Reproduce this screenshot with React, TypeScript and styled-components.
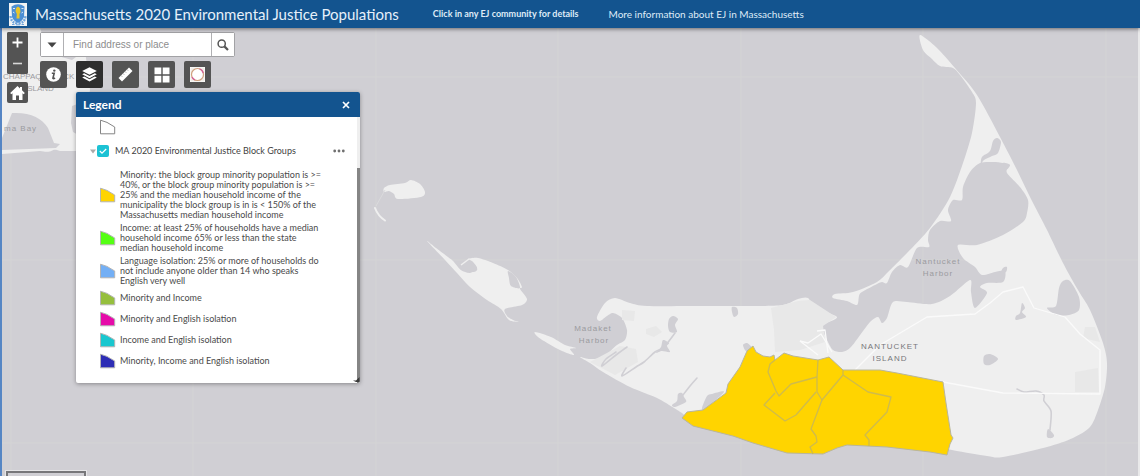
import React from "react";
import styled, { createGlobalStyle, css } from "styled-components";

const GlobalStyle = createGlobalStyle`
  * { box-sizing: border-box; }
  body { margin: 0; font-family: Lato, "Open Sans", sans-serif; background: #d0cfd4; }
  button, input { font-family: inherit; }
`;

const BLUE = "#13548f";
const SEA = "#d0cfd4";
const LAND = "#efefef";

/* ---------- page frame ---------- */

const Page = styled.div`
  min-height: 100vh;
  display: grid;
  grid-template-rows: auto 1fr;
`;

const Header = styled.header`
  display: flex;
  align-items: center;
  height: 28px;
  padding-left: 9px;
  background: ${BLUE};
  color: #fff;
  box-shadow: 0 1px 4px rgba(0, 0, 0, 0.5);
  z-index: 2;
`;

const Title = styled.h1`
  margin: 0 34px 0 8px;
  font-size: 15px;
  line-height: 20px;
  font-weight: 400;
  color: #e6f0fa;
  white-space: nowrap;
`;

const HeaderLink = styled.a<{ $strong?: boolean }>`
  margin-right: 30px;
  font-size: ${(p) => (p.$strong ? 9 : 10)}px;
  line-height: 14px;
  font-weight: ${(p) => (p.$strong ? 700 : 400)};
  color: #dfebf7;
  text-decoration: none;
  white-space: nowrap;
`;

const Stage = styled.main`
  display: grid;
  position: relative;
  border-left: 2px solid #5585c4;
  background: ${SEA};
  overflow: hidden;
  & > * { grid-area: 1 / 1; }
`;

const MapSvg = styled.svg`
  display: block;
  width: 100%;
  height: 100%;
`;

const Overlay = styled.div`
  display: flex;
  align-items: flex-start;
  gap: 12px;
  padding: 4px 0 0 5px;
  z-index: 1;
`;

const Stack = styled.div<{ $gap: number }>`
  display: flex;
  flex-direction: column;
  gap: ${(p) => p.$gap}px;
`;

const ScaleBar = styled.div`
  position: absolute;
  left: 4px;
  bottom: 0;
  width: 80px;
  height: 5px;
  border: 2px solid #77777a;
  border-bottom: 0;
  outline: 1px solid #e6e6e8;
`;

/* ---------- map controls ---------- */

const MapButton = styled.button<{ $size?: number; $active?: boolean }>`
  display: flex;
  align-items: center;
  justify-content: center;
  width: ${(p) => p.$size ?? 27}px;
  height: ${(p) => p.$size ?? 27}px;
  padding: 0;
  border: 0;
  border-radius: 2px;
  background: ${(p) => (p.$active ? "#2e2e2e" : "#545454")};
  color: #fff;
`;

const ZoomGroup = styled.div`
  display: flex;
  flex-direction: column;
  border-radius: 2px;
  background: #545454;
`;

const SearchBox = styled.form`
  display: flex;
  width: 195px;
  height: 25px;
  border: 1px solid #a2a2a5;
  border-radius: 2px;
  background: #fff;
`;

const SearchButton = styled.button<{ $side: "left" | "right" }>`
  display: flex;
  align-items: center;
  justify-content: center;
  width: 23px;
  padding: 0;
  border: 0;
  background: #fff;
  ${(p) =>
    p.$side === "left"
      ? css`border-right: 1px solid #b0b0b3;`
      : css`border-left: 1px solid #b0b0b3;`}
`;

const SearchInput = styled.input`
  flex: 1;
  min-width: 0;
  padding: 0 9px;
  border: 0;
  outline: 0;
  font-family: "Liberation Sans", Arial, sans-serif;
  font-size: 10px;
  color: #555;
  background: transparent;
  &::placeholder { color: #8d8d8d; opacity: 1; }
`;

const Toolbar = styled.div`
  display: flex;
  gap: 9px;
`;

/* ---------- legend panel ---------- */

const Panel = styled.section`
  position: relative;
  width: 284px;
  margin-left: 36px;
  border-radius: 2px;
  background: #fff;
  box-shadow: 0 1px 4px rgba(0, 0, 0, 0.35);
  overflow: hidden;
`;

const PanelHeader = styled.div`
  display: flex;
  align-items: center;
  justify-content: space-between;
  height: 25px;
  padding: 0 10px 0 7px;
  background: ${BLUE};
  color: #fff;
`;

const PanelTitle = styled.h2`
  margin: 0;
  font-size: 12px;
  line-height: 16px;
  font-weight: 700;
`;

const PlainButton = styled.button`
  display: flex;
  padding: 0;
  border: 0;
  background: transparent;
  color: inherit;
`;

const PanelBody = styled.div`
  display: grid;
  grid-template-columns: 1fr 3px;
`;

const PanelContent = styled.div`
  padding: 2px 12px 13px 14px;
`;

const ScrollTrack = styled.div`
  padding-top: 51px;
  background: #efefef;
`;

const ScrollThumb = styled.div`
  height: 100%;
  background: #858585;
`;

const ResizeHandle = styled.svg`
  position: absolute;
  right: 0;
  bottom: 1px;
`;

const PriorSwatch = styled.div`
  padding-left: 9px;
  height: 24px;
`;

const LayerRow = styled.div`
  display: flex;
  align-items: center;
  height: 16px;
  margin-bottom: 11px;
`;

const LayerLabel = styled.label`
  flex: 1;
  margin-left: 6px;
  font-size: 9px;
  line-height: 12px;
  color: #3f3f3f;
`;

const Check = styled.input`
  appearance: none;
  width: 12px;
  height: 12px;
  margin: 0 0 0 1px;
  border-radius: 2px;
  background: #1cc2d4;
`;

const CheckWrap = styled.span`
  display: grid;
  & > * { grid-area: 1 / 1; }
  & > svg { pointer-events: none; margin: 2px 0 0 3px; }
`;

const LegendList = styled.ul`
  display: flex;
  flex-direction: column;
  gap: 3px;
  margin: 0;
  padding: 0 0 0 9px;
  list-style: none;
`;

const LegendItem = styled.li`
  display: flex;
  align-items: center;
  gap: 4px;
  min-height: 18px;
  font-size: 9px;
  line-height: 10px;
  color: #4a4a4a;
`;

const LegendText = styled.span`
  width: 208px;
`;

const Swatch = ({ color, stroke = "#b4b4b4" }: { color: string; stroke?: string }) => (
  <svg width="17" height="16" viewBox="0 0 17 16" aria-hidden="true">
    <path d="M1.5 1.2 L8 3.4 L15.7 8 V14.8 H1.5 Z" fill={color} stroke={stroke} strokeWidth="1" />
  </svg>
);

const LEGEND: { color: string; lines: string[] }[] = [
  {
    color: "#ffd400",
    lines: [
      "Minority: the block group minority population is >=",
      "40%, or the block group minority population is >=",
      "25% and the median household income of the",
      "municipality the block group is in is < 150% of the",
      "Massachusetts median household income",
    ],
  },
  {
    color: "#55ff13",
    lines: [
      "Income: at least 25% of households have a median",
      "household income 65% or less than the state",
      "median household income",
    ],
  },
  {
    color: "#73aff5",
    lines: [
      "Language isolation: 25% or more of households do",
      "not include anyone older than 14 who speaks",
      "English very well",
    ],
  },
  { color: "#95bf3d", lines: ["Minority and Income"] },
  { color: "#e60ba9", lines: ["Minority and English isolation"] },
  { color: "#19c7cf", lines: ["Income and English isolation"] },
  { color: "#2d2db5", lines: ["Minority, Income and English isolation"] },
];

/* ---------- map drawing ---------- */

/** Turns "x,y x,y ..." into a smooth curve through all the points. */
function curve(list: string, closed = true): string {
  const p = list.trim().split(/\s+/).map((s) => s.split(",").map(Number));
  const n = p.length;
  const at = (i: number) => (closed ? p[(i + n) % n] : p[Math.max(0, Math.min(n - 1, i))]);
  let d = `M${p[0][0]} ${p[0][1]}`;
  for (let i = 0; i < (closed ? n : n - 1); i++) {
    const [a, b, c, e] = [at(i - 1), at(i), at(i + 1), at(i + 2)];
    const k = 7;
    d += ` C${(b[0] + (c[0] - a[0]) / k).toFixed(1)} ${(b[1] + (c[1] - a[1]) / k).toFixed(1)} ${(c[0] - (e[0] - b[0]) / k).toFixed(1)} ${(c[1] - (e[1] - b[1]) / k).toFixed(1)} ${c[0]} ${c[1]}`;
  }
  return closed ? d + "Z" : d;
}

const NANTUCKET = `920,35 937,48 955,68 977,95 1000,137 1017,170 1030,197 1047,230 1063,263 1078,290 1090,310 1103,343
 1107,363 1105,387 1098,410 1090,427 1073,438 1047,447 1003,457 987,456 952,450 900,440 760,440 690,417
 682,413 674,408 657,398 630,387 603,372 590,363 580,357 590,359 603,357 617,345 625,340 627,330 622,318 613,313 607,316
 600,321 597,317 605,303 615,298 630,303 647,306 700,306 753,306 783,305 798,299 808,298 815,308 837,317
 823,325 823,330 827,340 833,350 842,352 850,348 858,338 870,322 878,317 882,323 887,318 893,302 907,302
 932,304 950,296 970,280 971,292 975,308 987,293 980,287 987,283 1003,282 1005,271 995,272 982,275 975,267 963,258 958,245
 977,245 1003,235 1023,222 1027,213 1028,200 1020,187 1007,173 1008,165 1003,163 993,162 980,163 970,172
 963,187 962,200 953,200 948,210 951,221 940,221 930,230 928,240 929,247 917,248 908,267 900,265 892,272
 887,283 882,282 877,284 862,292 859,296 857,305 847,301 833,298 835,294 853,292 877,282 889,271 907,253 930,228
 950,197 963,163 972,133 976,103 972,92 960,75 953,68 940,66 932,59 923,50`;

const ISLETS = [
  // Muskeget
  "384,188 390,185 405,183 411,180 420,184 425,192 421,197 398,199 394,194 389,191 384,192",
  // Tuckernuck
  "427,241 436,248 448,257 453,261 461,270 470,273 477,268 472,261 468,259 478,258 493,263 508,270 517,278 522,287 520,289 527,299 522,305 505,309 507,316 513,320 519,322 509,320 501,309 487,300 470,287 457,273 445,260",
  // Esther
  "535,332 551,337 565,345 576,348 570,349 574,355 562,351 549,344 538,337",
];

const PONDS = [
  "508,271 516,277 520,288 511,286 509,278",
  "997,138 1001,142 998,153 992,156 984,160 981,164 982,157 990,151 993,141",
  "1003,163 1010,165 1006,170",
  "1063,281 1070,281 1079,297 1079,310 1069,315 1056,315 1047,308 1056,306 1059,288",
  "984,356 990,354 998,359 990,365 984,364",
  "1022,303 1025,308 1022,312 1026,317 1016,320 1016,316 1020,313",
  "1003,268 1007,267 1006,272 1001,273",
  "1048,429 1054,435 1052,438 1047,437",
  "669,319 673,316 678,319 675,325 677,332 670,332 668,326",
  "663,340 669,343 667,346 670,352 662,351 656,353 661,347",
  "682,393 684,397 686,402 675,407 672,405 677,401 678,394",
  "732,307 737,308 738,314 734,317 732,312",
  "743,345 747,343 752,348 746,351",
  "707,396 712,394 724,392 705,409 702,408",
];

const CREEKS = [
  "675,333 669,341 663,348 655,352 644,362 636,367 622,376 626,368",
  "697,378 690,386 683,395",
  "627,347 616,355 602,366 606,359 616,352",
  "1017,389 1024,392 1036,391 1044,395 1044,401 1051,411 1050,430",
];

const TINTS = [
  "771,308 798,301 810,300 836,317 823,326 825,342 800,350 775,352 774,330",
  "622,310 635,311 634,321 622,320",
  "646,329 656,326 662,332 654,337 646,334",
  "590,362 620,346 636,349 638,362 615,375",
  "1075,372 1098,368 1099,392 1075,392",
  "1085,327 1095,327 1100,342 1083,338",
];

const ROADS = [
  "855,370 880,345 927,317 975,314 990,303 1003,292 1023,287 1034,308 1065,317 1080,334 1100,350 1100,394 1003,393 943,382",
  "800,341 808,343 821,334 832,352",
  "800,341 818,355",
  "817,331 825,330 828,353",
];

const EJ_AREA = "682,418 687,412 703,410 726,393 728,384 740,367 747,351 753,346 756,352 763,356 770,357 774,355 775,360 784,353 793,356 818,360 829,357 843,370 880,370 897,373 943,382 946,403 951,435 953,438 950,444 947,455 930,452 887,447 847,445 837,448 823,454 787,453 753,443 733,436 693,426";

const EJ_LINES = [
  "775,360 770,364 768,372 776,391 779,396 791,384 817,377",
  "775,393 764,405 785,421 796,415 816,392",
  "818,360 817,377 817,392 822,400 843,375",
  "843,370 843,375 868,392 891,397 887,412 865,435 869,440 869,446",
  "822,400 811,429 816,436 817,442 810,447 813,454",
];

const MapDrawing = () => (
  <MapSvg viewBox="2 28 1138 448" preserveAspectRatio="xMinYMin slice" role="img" aria-label="Map of Nantucket Island">
    <rect x="0" y="28" width="1140" height="448" fill={SEA} />
    <g stroke="#d4d4d5" strokeWidth="1">
      {[11, 193, 376, 558, 741, 923, 1106].map((x) => <path key={x} d={`M${x} 28V476`} />)}
      {[77, 260, 443].map((y) => <path key={y} d={`M2 ${y}H1140`} />)}
    </g>
    <g fill={LAND}>
      <path d="M0 28H92L85 50 90 90 84 120 92 151H60C50 147 55 154 40 151L2 154Z" />
      <path d={curve(NANTUCKET)} />
      {ISLETS.map((d) => <path key={d} d={curve(d)} />)}
    </g>
    <path d="M385 190 376 206" stroke="#dadadc" fill="none" />
    <path d="M375 208Q378 216 385 220.500" stroke={LAND} strokeWidth="2" strokeLinecap="round" fill="none" />
    <g fill={SEA}>
      <path d="M2 138 12 113C30 112 42 118 48 128L54 143 60 144 56 148 2 150Z" />
      <path d="M40 28H92V45L72 60 58 56 45 43Z" />
      <path d="M72 106 80 103V136L73 132 71 123Z" />
      <path d={curve("461,270 464,265 468,259 477,268 474,272")} />
    </g>
    <path d="M461 265 469 259" stroke={LAND} strokeWidth="1.500" />
    <g fill="#e8e8e8">{TINTS.map((d) => <polygon key={d} points={d} />)}</g>
    <g fill={SEA}>{PONDS.map((d) => <path key={d} d={curve(d)} />)}</g>
    <g fill="none" stroke={SEA} strokeWidth="1.600" strokeLinejoin="round" strokeLinecap="round">
      {CREEKS.map((d) => <path key={d} d={curve(d, false)} />)}
    </g>
    <g fill="none" stroke="#fafafa" strokeWidth="1.300" strokeLinejoin="round">
      {ROADS.map((d) => <polyline key={d} points={d} />)}
    </g>
    <polygon points={EJ_AREA} fill="#ffd400" stroke="#b9b69c" strokeWidth="1" strokeLinejoin="round" />
    <g fill="none" stroke="#cfbb4c" strokeWidth="1.300" strokeLinejoin="round">
      {EJ_LINES.map((d) => <polyline key={d} points={d} />)}
    </g>
    <g fontFamily='"Liberation Sans", Arial, sans-serif' fontSize="8" fill="#9b9b9f">
      <text x="3" y="79">CHAPPAQUIDDICK</text>
      <text x="25" y="91">ISLAND</text>
      <g letterSpacing="1">
        <text x="4" y="131">ma Bay</text>
        <g textAnchor="middle">
          <text x="593" y="331">Madaket</text>
          <text x="594" y="343">Harbor</text>
          <text x="938" y="264">Nantucket</text>
          <text x="938" y="276">Harbor</text>
          <text x="890" y="349" fill="#77777a">NANTUCKET</text>
          <text x="890" y="361" fill="#77777a">ISLAND</text>
        </g>
      </g>
    </g>
    <path d="M1139 28V476" stroke="#e9e9ea" strokeWidth="2" />
  </MapSvg>
);

/* ---------- icons ---------- */

const Seal = () => (
  <svg width="18" height="23" viewBox="0 0 18 23" aria-hidden="true">
    <rect width="18" height="23" fill="#f1f4f4" />
    <path d="M2.5 3.5Q9 -1 15.5 3.5L15 14Q13 18.5 9 20 5 18.5 3 14Z" fill="#4b8fd4" />
    <path d="M1.5 13Q2 20 9 20.5 16 20 16.500 13" fill="none" stroke="#6fa5dc" strokeWidth="2.4" strokeDasharray="2 1" />
    <path d="M4 5.500h2M12.500 5.500h2M4 9l1.500 1M14 9l-1.500 1" stroke="#dceaf6" />
    <path d="M9 3.500 11 5 11.500 9 10.500 11 10.500 15.500H7.500L7.800 11 6.500 8 7.200 5Z" fill="#e8c529" />
    <path d="M3 21.500h2.500M7 21.800h4M12.500 21.500H15" stroke="#6fa5dc" />
  </svg>
);

const PlusIcon = () => (
  <svg width="11" height="11" viewBox="0 0 11 11"><path d="M5.500 .5v10M.5 5.500h10" stroke="#fff" strokeWidth="1.8" /></svg>
);
const MinusIcon = () => (
  <svg width="11" height="11" viewBox="0 0 11 11"><path d="M1 5.500h9" stroke="#d8d8d8" strokeWidth="1.6" /></svg>
);
const HomeIcon = () => (
  <svg width="15" height="14" viewBox="0 0 15 14">
    <path d="M7.500 0 .2 7 1.300 8.200 2.500 7.200V14H6V9.500H9V14H12.500V7.200L13.700 8.200 14.800 7 12 4.300V1H10V2.400Z" fill="#fff" />
  </svg>
);
const InfoIcon = () => (
  <svg width="15" height="15" viewBox="0 0 15 15">
    <circle cx="7.500" cy="7.500" r="7.300" fill="#fff" />
    <circle cx="8.300" cy="3.600" r="1.200" fill="#545454" />
    <path d="M5.800 6.200H8.200L6.900 11.300Q7.600 12 9 10.900" stroke="#545454" strokeWidth="1.600" fill="none" />
  </svg>
);
const LayersIcon = () => (
  <svg width="15" height="15" viewBox="0 0 15 15" fill="#fff">
    <path d="M7.500 .3 14.800 4 7.500 7.800 .2 4Z" />
    <path d="M.2 7.300 2.200 6.300 7.500 9 12.800 6.300 14.800 7.300 7.500 11.200Z" />
    <path d="M.2 10.600 2.200 9.600 7.500 12.300 12.800 9.600 14.800 10.600 7.500 14.500Z" />
  </svg>
);
const RulerIcon = () => (
  <svg width="15" height="15" viewBox="0 0 15 15">
    <path d="M.5 11 11 .5 14.500 4 4 14.500Z" fill="#fff" />
    <path d="M3 8.500 4.200 9.700M5 6.500 6.200 7.700M7 4.500 8.200 5.700M9 2.500 10.200 3.700" stroke="#8a8a8a" strokeWidth=".8" />
  </svg>
);
const GridIcon = () => (
  <svg width="16" height="16" viewBox="0 0 16 16" fill="#fff">
    <path d="M.5 .5H7.300V7.300H.5ZM8.700 .5H15.500V7.300H8.700ZM.5 8.700H7.300V15.500H.5ZM8.700 8.700H15.500V15.500H8.700Z" />
  </svg>
);
const RingIcon = () => (
  <svg width="15" height="15" viewBox="0 0 15 15">
    <rect width="15" height="15" fill="#fff" />
    <rect x=".5" y=".5" width="14" height="14" fill="#f0ede8" />
    <circle cx="7.500" cy="7.500" r="6" fill="#fff" stroke="#cfa07e" strokeWidth="1.200" />
    <path d="M9.500 1.800A6 6 0 0 1 13.300 6M2 10A6 6 0 0 0 5 13" fill="none" stroke="#d65b9a" strokeWidth="1.200" />
  </svg>
);

const TOOLS = [
  { name: "About", icon: <InfoIcon /> },
  { name: "Legend", icon: <LayersIcon />, active: true },
  { name: "Measurement", icon: <RulerIcon /> },
  { name: "Basemap gallery", icon: <GridIcon /> },
  { name: "Buffer", icon: <RingIcon /> },
];

export default function App() {
  return (
    <Page>
      <GlobalStyle />
      <Header>
        <Seal />
        <Title>Massachusetts 2020 Environmental Justice Populations</Title>
        <HeaderLink href="#details" $strong>Click in any EJ community for details</HeaderLink>
        <HeaderLink href="#more">More information about EJ in Massachusetts</HeaderLink>
      </Header>
      <Stage>
        <MapDrawing />
        <Overlay>
          <Stack $gap={8}>
            <ZoomGroup>
              <MapButton $size={21} aria-label="Zoom in"><PlusIcon /></MapButton>
              <MapButton $size={21} aria-label="Zoom out"><MinusIcon /></MapButton>
            </ZoomGroup>
            <MapButton $size={21} aria-label="Default extent"><HomeIcon /></MapButton>
          </Stack>
          <Stack $gap={4}>
            <SearchBox onSubmit={(e) => e.preventDefault()}>
              <SearchButton type="button" $side="left" aria-label="Search sources">
                <svg width="10" height="6" viewBox="0 0 10 6"><path d="M.5 .5H9.500L5 5.500Z" fill="#444" /></svg>
              </SearchButton>
              <SearchInput aria-label="Find address or place" placeholder="Find address or place" />
              <SearchButton type="submit" $side="right" aria-label="Search">
                <svg width="12" height="12" viewBox="0 0 12 12" fill="none" stroke="#555">
                  <circle cx="4.700" cy="4.700" r="3.600" strokeWidth="1.500" />
                  <path d="M7.400 7.400 11 11" strokeWidth="2.200" />
                </svg>
              </SearchButton>
            </SearchBox>
            <Toolbar>
              {TOOLS.map((t) => (
                <MapButton key={t.name} $active={t.active} aria-label={t.name}>{t.icon}</MapButton>
              ))}
            </Toolbar>
            <Panel>
              <PanelHeader>
                <PanelTitle>Legend</PanelTitle>
                <PlainButton aria-label="Close">
                  <svg width="8" height="8" viewBox="0 0 8 8"><path d="M1 1 7 7M7 1 1 7" stroke="#fff" strokeWidth="1.700" /></svg>
                </PlainButton>
              </PanelHeader>
              <PanelBody>
                <PanelContent>
                  <PriorSwatch><Swatch color="#fff" stroke="#858585" /></PriorSwatch>
                  <LayerRow>
                    <PlainButton aria-label="Collapse layer">
                      <svg width="6" height="5" viewBox="0 0 6 5"><path d="M0 .5H6L3 4.500Z" fill="#aaa" /></svg>
                    </PlainButton>
                    <CheckWrap>
                      <Check id="layer" type="checkbox" defaultChecked />
                      <svg width="8" height="8" viewBox="0 0 8 8"><path d="M.8 4 3 6.200 7.200 2" fill="none" stroke="#fff" strokeWidth="1.200" /></svg>
                    </CheckWrap>
                    <LayerLabel htmlFor="layer">MA 2020 Environmental Justice Block Groups</LayerLabel>
                    <PlainButton aria-label="Layer options">
                      <svg width="12" height="4" viewBox="0 0 12 4" fill="#6f6f6f">
                        <circle cx="1.700" cy="2" r="1.400" /><circle cx="6" cy="2" r="1.400" /><circle cx="10.300" cy="2" r="1.400" />
                      </svg>
                    </PlainButton>
                  </LayerRow>
                  <LegendList>
                    {LEGEND.map((item) => (
                      <LegendItem key={item.color}>
                        <Swatch color={item.color} />
                        <LegendText>
                          {item.lines.map((line, i) => (
                            <React.Fragment key={line}>{i > 0 && <br />}{line}</React.Fragment>
                          ))}
                        </LegendText>
                      </LegendItem>
                    ))}
                  </LegendList>
                </PanelContent>
                <ScrollTrack><ScrollThumb /></ScrollTrack>
              </PanelBody>
              <ResizeHandle width="7" height="5" viewBox="0 0 7 5" aria-hidden="true">
                <path d="M0 3.500H3L6.500 0V5H3Z" fill="#3a3a3a" />
              </ResizeHandle>
            </Panel>
          </Stack>
        </Overlay>
        <ScaleBar />
      </Stage>
    </Page>
  );
}
